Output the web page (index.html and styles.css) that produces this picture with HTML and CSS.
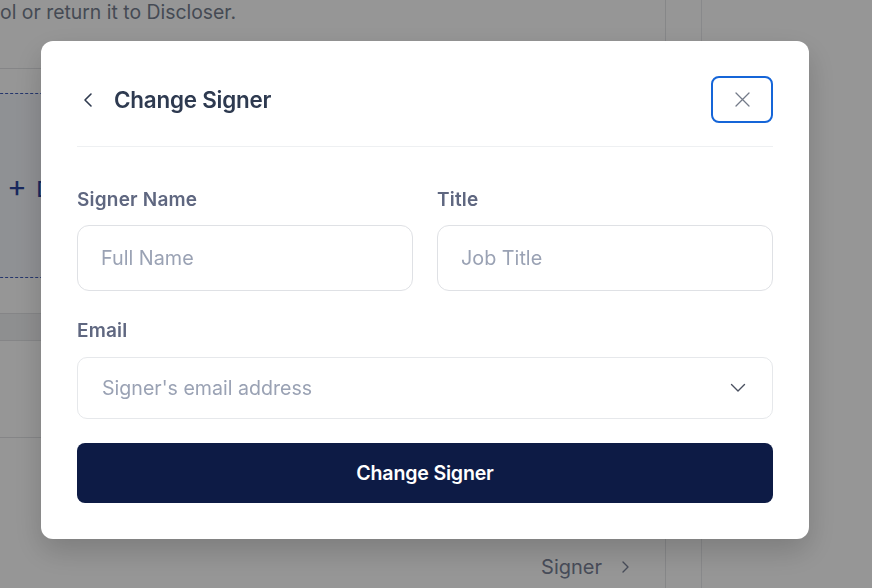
FILE: index.html
```html
<!DOCTYPE html>
<html lang="en">
<head>
    <meta charset="UTF-8">
    <meta name="viewport" content="width=device-width,initial-scale=1">
    <title>Change Signer</title>
    <link rel="stylesheet" href="styles.css">
</head>
<body>
    <div class="page">
        <main class="main">
            <p class="intro">ol or return it to Discloser.</p>
            <section class="card">
                <div class="dropzone">
                    <span class="drop-add"><span class="plus">+</span> Doc</span>
                </div>
                <div class="table-head"></div>
                <div class="row"></div>
                <div class="row row-foot">
                    <span class="row-link">Signer
                        <svg width="10" height="14" viewBox="0 0 10 14"><path d="M3 2l5 5-5 5" fill="none" stroke="currentColor" stroke-width="1.4" stroke-linecap="round" stroke-linejoin="round"/></svg>
                    </span>
                </div>
            </section>
        </main>
        <div class="gutter"></div>
        <aside class="side"></aside>
    </div>

    <div class="overlay">
        <div class="modal">
            <div class="modal-header">
                <button class="back-btn" type="button">
                    <svg width="12" height="16" viewBox="0 0 12 16"><path d="M9 2L3 8l6 6" fill="none" stroke="currentColor" stroke-width="1.6" stroke-linecap="round" stroke-linejoin="round"/></svg>
                </button>
                <h2 class="modal-title">Change Signer</h2>
                <button class="close-btn" type="button">
                    <svg width="15" height="15" viewBox="0 0 15 15"><path d="M1 1l13 13M14 1L1 14" fill="none" stroke="currentColor" stroke-width="1.3" stroke-linecap="round"/></svg>
                </button>
            </div>

            <form class="form">
                <div class="form-row">
                    <div class="field">
                        <label class="label">Signer Name</label>
                        <input class="input" type="text" placeholder="Full Name">
                    </div>
                    <div class="field">
                        <label class="label">Title</label>
                        <input class="input" type="text" placeholder="Job Title">
                    </div>
                </div>
                <div class="field">
                    <label class="label">Email</label>
                    <div class="select">
                        <span class="select-placeholder">Signer's email address</span>
                        <svg width="16" height="10" viewBox="0 0 16 10"><path d="M1.5 1.5l6.5 6.5 6.5-6.5" fill="none" stroke="currentColor" stroke-width="1.4" stroke-linecap="round" stroke-linejoin="round"/></svg>
                    </div>
                </div>
                <button class="submit-btn" type="button">Change Signer</button>
            </form>
        </div>
    </div>
</body>
</html>
```

FILE: styles.css
```css
* {
    box-sizing: border-box;
}
body {
    margin: 0;
    font-family: Inter, "Noto Sans", sans-serif;
    background: #fff;
    overflow: hidden;
}
.page {
    display: flex;
    height: 588px;
}
.main {
    width: 666px;
    border-right: 1px solid #e4e5e8;
}
.gutter {
    width: 35px;
}
.side {
    flex: 1;
    border-left: 1px solid #e8e9ec;
}
.intro {
    margin: 0;
    font-size: 19.4px;
    line-height: 24px;
    color: #767f90;
}
.card {
    margin: 44px 0 0 -40px;
    border-top: 1px solid #e2e3e6;
    padding-top: 24px;
}
.dropzone {
    height: 185px;
    border: 1px dashed #3d5bb8;
    background: #f4f6fb;
    display: flex;
    align-items: center;
    padding-left: 46px;
}
.drop-add {
    color: #2a45a0;
    font-size: 21px;
    font-weight: 500;
}
.plus {
    font-size: 30px;
    font-weight: 400;
    margin-right: 4px;
}
.table-head {
    margin-top: 35px;
    height: 28px;
    background: #f2f3f5;
    border-top: 1px solid #e2e3e6;
    border-bottom: 1px solid #e2e3e6;
}
.row {
    height: 97px;
    border-bottom: 1px solid #e2e3e6;
}
.row-foot {
    border-bottom: none;
    display: flex;
    justify-content: flex-end;
    padding: 129px 35px 0 0;
}
.row-link {
    display: flex;
    align-items: center;
    gap: 18px;
    font-size: 20px;
    line-height: 24px;
    color: #7a8298;
}

.overlay {
    position: fixed;
    inset: 0;
    background: rgba(0, 0, 0, 0.41);
    padding: 41px 0 0 41px;
}
.modal {
    width: 768px;
    background: #fff;
    border-radius: 12px;
    padding: 35px 36px 36px;
    box-shadow: 0 12px 30px rgba(0, 0, 0, 0.18);
}
.modal-header {
    display: flex;
    align-items: center;
    padding-bottom: 23px;
    border-bottom: 1px solid #eef0f2;
}
.back-btn {
    border: none;
    background: none;
    width: 37px;
    height: 20px;
    display: flex;
    align-items: center;
    justify-content: flex-start;
    padding: 0 0 0 5px;
    color: #2f3a4f;
}
.modal-title {
    flex: 1;
    margin: 0;
    font-size: 22.4px;
    font-weight: 600;
    color: #2e3a50;
    letter-spacing: -0.2px;
}
.close-btn {
    width: 62px;
    height: 47px;
    border: 2px solid #1565d8;
    border-radius: 8px;
    background: #fff;
    color: #747b89;
    display: flex;
    align-items: center;
    justify-content: center;
    padding: 0;
}
.form {
    padding-top: 41px;
    display: flex;
    flex-direction: column;
}
.form-row {
    display: grid;
    grid-template-columns: minmax(0, 1fr) minmax(0, 1fr);
    gap: 24px;
    margin-bottom: 28px;
}
.field {
    display: flex;
    flex-direction: column;
    min-width: 0;
}
.label {
    font-size: 19px;
    line-height: 24px;
    font-weight: 600;
    color: #5f6780;
    margin-bottom: 13px;
    letter-spacing: 0.2px;
}
.field .select {
    margin-top: 1px;
}
.input {
    width: 100%;
    height: 66px;
    border: 1px solid #dfe1e5;
    border-radius: 12px;
    padding: 0 23px;
    font-family: inherit;
    font-size: 19.8px;
    color: #2e3a50;
    outline: none;
}
.input::placeholder {
    color: #9aa2b4;
}
.select {
    height: 62px;
    border: 1px solid #e6e8eb;
    border-radius: 10px;
    display: flex;
    align-items: center;
    justify-content: space-between;
    padding: 0 26px 0 24px;
    color: #4a5060;
}
.select-placeholder {
    font-size: 19.6px;
    color: #9aa2b4;
}
.submit-btn {
    margin-top: 24px;
    height: 60px;
    border: none;
    border-radius: 8px;
    background: #0d1b45;
    color: #fff;
    font-family: inherit;
    font-size: 19.6px;
    font-weight: 600;
    letter-spacing: -0.2px;
}
```
